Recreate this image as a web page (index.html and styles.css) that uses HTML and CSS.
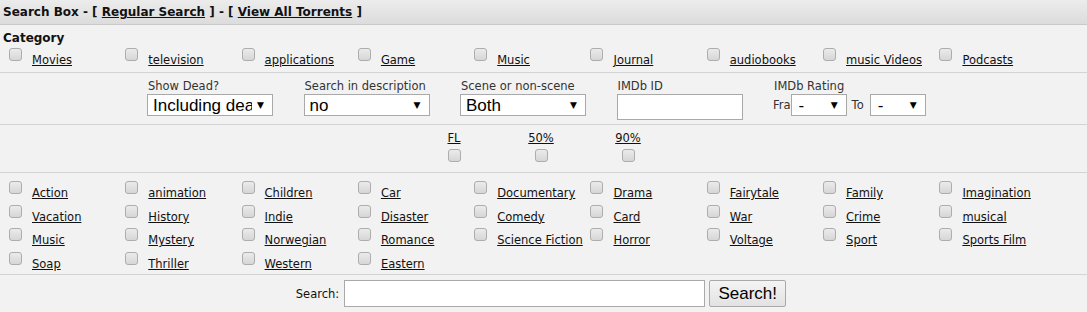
FILE: index.html
```html
<!DOCTYPE html>
<html>
<head>
    <title>Search Box</title>
    <link rel="stylesheet" href="styles.css">
</head>
<body>
    <div class="search-box">
        <div class="box-head">
            Search Box - [ <a href="#">Regular Search</a> ] - [ <a href="#">View All Torrents</a> ]
        </div>

        <div class="section cats">
            <div class="cat-title">Category</div>
            <div class="check-grid">
                <label class="check"><input type="checkbox"><a href="#">Movies</a></label>
                <label class="check"><input type="checkbox"><a href="#">television</a></label>
                <label class="check"><input type="checkbox"><a href="#">applications</a></label>
                <label class="check"><input type="checkbox"><a href="#">Game</a></label>
                <label class="check"><input type="checkbox"><a href="#">Music</a></label>
                <label class="check"><input type="checkbox"><a href="#">Journal</a></label>
                <label class="check"><input type="checkbox"><a href="#">audiobooks</a></label>
                <label class="check"><input type="checkbox"><a href="#">music Videos</a></label>
                <label class="check"><input type="checkbox"><a href="#">Podcasts</a></label>
            </div>
        </div>

        <div class="section options">
            <div class="opt">
                <span class="opt-label">Show Dead?</span>
                <span class="select-wrap">
                    <select class="select">
                        <option>Including dead</option>
                        <option>Only dead</option>
                        <option>Active</option>
                    </select>
                </span>
            </div>
            <div class="opt">
                <span class="opt-label">Search in description</span>
                <span class="select-wrap">
                    <select class="select">
                        <option>no</option>
                        <option>yes</option>
                    </select>
                </span>
            </div>
            <div class="opt">
                <span class="opt-label">Scene or non-scene</span>
                <span class="select-wrap">
                    <select class="select">
                        <option>Both</option>
                        <option>Scene</option>
                        <option>Non-scene</option>
                    </select>
                </span>
            </div>
            <div class="opt">
                <span class="opt-label">IMDb ID</span>
                <input type="text" class="text-input imdb-id">
            </div>
            <div class="opt">
                <span class="opt-label">IMDb Rating</span>
                <div class="rating">
                    <span>Fra</span>
                    <span class="select-wrap small">
                        <select class="select"><option>-</option></select>
                    </span>
                    <span class="to">To</span>
                    <span class="select-wrap small">
                        <select class="select"><option>-</option></select>
                    </span>
                </div>
            </div>
        </div>

        <div class="section freeleech">
            <label class="fl-item"><a href="#">FL</a><input type="checkbox"></label>
            <label class="fl-item"><a href="#">50%</a><input type="checkbox"></label>
            <label class="fl-item"><a href="#">90%</a><input type="checkbox"></label>
        </div>

        <div class="section genres">
            <div class="check-grid">
                <label class="check"><input type="checkbox"><a href="#">Action</a></label>
                <label class="check"><input type="checkbox"><a href="#">animation</a></label>
                <label class="check"><input type="checkbox"><a href="#">Children</a></label>
                <label class="check"><input type="checkbox"><a href="#">Car</a></label>
                <label class="check"><input type="checkbox"><a href="#">Documentary</a></label>
                <label class="check"><input type="checkbox"><a href="#">Drama</a></label>
                <label class="check"><input type="checkbox"><a href="#">Fairytale</a></label>
                <label class="check"><input type="checkbox"><a href="#">Family</a></label>
                <label class="check"><input type="checkbox"><a href="#">Imagination</a></label>

                <label class="check"><input type="checkbox"><a href="#">Vacation</a></label>
                <label class="check"><input type="checkbox"><a href="#">History</a></label>
                <label class="check"><input type="checkbox"><a href="#">Indie</a></label>
                <label class="check"><input type="checkbox"><a href="#">Disaster</a></label>
                <label class="check"><input type="checkbox"><a href="#">Comedy</a></label>
                <label class="check"><input type="checkbox"><a href="#">Card</a></label>
                <label class="check"><input type="checkbox"><a href="#">War</a></label>
                <label class="check"><input type="checkbox"><a href="#">Crime</a></label>
                <label class="check"><input type="checkbox"><a href="#">musical</a></label>

                <label class="check"><input type="checkbox"><a href="#">Music</a></label>
                <label class="check"><input type="checkbox"><a href="#">Mystery</a></label>
                <label class="check"><input type="checkbox"><a href="#">Norwegian</a></label>
                <label class="check"><input type="checkbox"><a href="#">Romance</a></label>
                <label class="check"><input type="checkbox"><a href="#">Science Fiction</a></label>
                <label class="check"><input type="checkbox"><a href="#">Horror</a></label>
                <label class="check"><input type="checkbox"><a href="#">Voltage</a></label>
                <label class="check"><input type="checkbox"><a href="#">Sport</a></label>
                <label class="check"><input type="checkbox"><a href="#">Sports Film</a></label>

                <label class="check"><input type="checkbox"><a href="#">Soap</a></label>
                <label class="check"><input type="checkbox"><a href="#">Thriller</a></label>
                <label class="check"><input type="checkbox"><a href="#">Western</a></label>
                <label class="check"><input type="checkbox"><a href="#">Eastern</a></label>
            </div>
        </div>

        <div class="section search-row">
            <label for="search" class="search-label">Search:</label>
            <input type="text" id="search" class="text-input search-input">
            <button class="search-btn">Search!</button>
        </div>
    </div>
</body>
</html>
```

FILE: styles.css
```css
body {
    margin: 0;
    font-family: "DejaVu Sans", Verdana, sans-serif;
    font-size: 11.5px;
    background-color: #f2f2f2;
    color: #111;
}
a {
    color: #111;
    text-decoration: underline;
}
.search-box {
    width: 1087px;
    background-color: #f2f2f2;
}
.box-head {
    height: 23px;
    line-height: 23px;
    padding: 1px 0 0 3px;
    font-size: 12px;
    font-weight: bold;
    background: linear-gradient(#ececec, #dcdcdc);
    border-bottom: 1px solid #c9c9c9;
}
.section {
    border-bottom: 1px solid #d3d3d3;
    box-sizing: border-box;
}
.cats {
    height: 48px;
    padding-top: 6px;
}
.cat-title {
    font-weight: bold;
    font-size: 12px;
    line-height: 14px;
    padding-left: 3px;
    margin-bottom: 3px;
}
.check-grid {
    display: grid;
    grid-template-columns: repeat(9, 116.3px);
    grid-auto-rows: 23.7px;
}
.check {
    display: flex;
    align-items: flex-start;
    white-space: nowrap;
}
input[type="checkbox"] {
    appearance: none;
    -webkit-appearance: none;
    width: 13px;
    height: 13px;
    margin: 0;
    border: 1px solid #adadad;
    border-radius: 3px;
    background: linear-gradient(#ebebeb, #d6d6d6);
    box-sizing: border-box;
    flex: none;
}
.check input {
    margin-left: 9px;
}
.check a {
    margin-left: 10px;
    padding-top: 5px;
    line-height: 14px;
}
.options {
    height: 52px;
    padding: 6px 0 0 147px;
    display: grid;
    grid-template-columns: repeat(5, 156.5px);
    align-items: start;
}
.opt-label {
    display: block;
    line-height: 14px;
    margin-bottom: 1px;
    padding-left: 1px;
    color: #333;
}
.select-wrap {
    position: relative;
    display: inline-block;
}
.select-wrap::after {
    content: "\25BC";
    position: absolute;
    right: 9px;
    top: 6px;
    font-size: 9px;
    line-height: 10px;
    color: #000;
    pointer-events: none;
}
.select {
    appearance: none;
    -webkit-appearance: none;
    width: 126px;
    height: 22px;
    padding: 0 20px 0 5px;
    border: 1px solid #a9a9a9;
    border-radius: 0;
    background: #fff;
    font-family: "Liberation Sans", Arial, sans-serif;
    font-size: 17px;
    color: #000;
    box-sizing: border-box;
}
.select-wrap.small .select {
    width: 56px;
    padding-left: 7px;
}
.text-input {
    height: 26px;
    border: 1px solid #a9a9a9;
    background: #fff;
    box-sizing: border-box;
    padding: 0 4px;
    margin: 0;
    font-family: "Liberation Sans", Arial, sans-serif;
    font-size: 15px;
}
.imdb-id {
    width: 126px;
}
.rating {
    display: flex;
    align-items: center;
    color: #333;
}
.rating .to {
    margin: 0 6px 0 5px;
}
.freeleech {
    height: 48px;
    padding: 6px 5px 0 0;
    display: flex;
    justify-content: center;
}
.fl-item {
    width: 87px;
    display: flex;
    flex-direction: column;
    align-items: center;
}
.fl-item a {
    line-height: 14px;
}
.fl-item input {
    margin-top: 4px;
}
.genres {
    height: 102px;
    padding-top: 8px;
}
.search-row {
    border-bottom: none;
    height: 37px;
    padding: 5px 5px 0 0;
    display: flex;
    justify-content: center;
    align-items: flex-start;
}
.search-label {
    line-height: 28px;
    margin-right: 5px;
}
.search-input {
    width: 361px;
    height: 27px;
}
.search-btn {
    width: 77px;
    height: 27px;
    margin-left: 4px;
    padding: 0;
    border: 1px solid #a9a9a9;
    border-radius: 2px;
    background: linear-gradient(#f4f4f4, #e2e2e2);
    font-family: "Liberation Sans", Arial, sans-serif;
    font-size: 17px;
    color: #000;
}
```
